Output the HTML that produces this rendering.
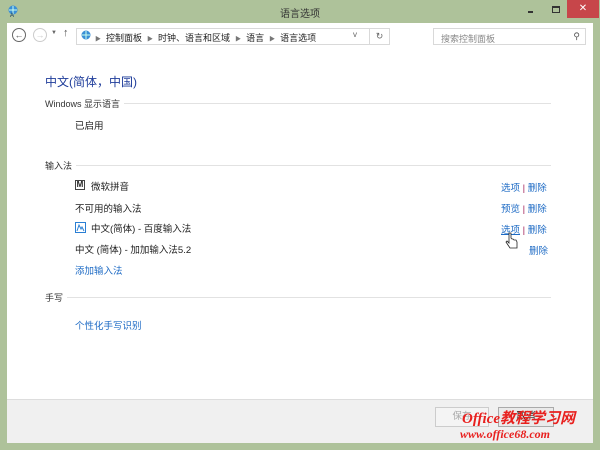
<!DOCTYPE html>
<html><head><meta charset="utf-8"><style>
*{margin:0;padding:0;box-sizing:border-box}
body{width:600px;height:450px;background:#aec29a;font-family:"Liberation Sans","Noto Sans CJK SC",sans-serif;font-size:9.5px;color:#1e1e1e;position:relative;overflow:hidden}
.a{position:absolute}
.link{color:#1e6bc5}
.sec{position:absolute;left:45px;right:49px;height:10px;display:flex;align-items:center;font-size:9px;color:#333}
.sec::after{content:"";flex:1;height:1px;background:#e2e2e2;margin-left:4px}
</style></head><body>
<div class="a" style="left:0;top:0;width:600px;height:23px;background:#aec29a"></div>
<div class="a" style="left:0;top:5px;width:600px;text-align:center;font-size:10px;color:#333">语言选项</div>
<svg class="a" style="left:7px;top:5px" width="12" height="12"><circle cx="6" cy="5" r="4.5" fill="#3a8fd6"/><path d="M2 5h8M6 1v8" stroke="#cfe" stroke-width="1"/><text x="3" y="12" font-size="6" fill="#135">A</text></svg>
<div class="a" style="left:528px;top:11px;width:5px;height:2px;background:#333"></div>
<div class="a" style="left:552px;top:6px;width:8px;height:7px;border:1px solid #333;border-top-width:2px"></div>
<div class="a" style="left:567px;top:0;width:32px;height:18px;background:#c7464a;color:#fff;text-align:center;font-size:10px;line-height:17px">✕</div>
<div class="a" style="left:7px;top:23px;width:586px;height:36px;background:#fff"></div>
<div class="a" style="left:12px;top:28px;width:14px;height:14px;border:1px solid #666;border-radius:50%;text-align:center;font-size:9px;line-height:12px;color:#555">←</div>
<div class="a" style="left:33px;top:28px;width:14px;height:14px;border:1px solid #ccc;border-radius:50%;text-align:center;font-size:9px;line-height:12px;color:#ccc">→</div>
<div class="a" style="left:51px;top:30px;font-size:6px;color:#666">▼</div>
<div class="a" style="left:63px;top:27px;font-size:11px;color:#555">↑</div>
<div class="a" style="left:76px;top:28px;width:294px;height:17px;border:1px solid #d9d9d9"></div>
<svg class="a" style="left:80px;top:30px" width="12" height="12"><circle cx="6" cy="5" r="4.5" fill="#3a8fd6"/><path d="M2 5h8M6 1v8" stroke="#cfe" stroke-width="1"/></svg>
<div class="a" style="left:95px;top:31px;font-size:9px;color:#222;white-space:nowrap"><span style="color:#777;font-size:6px">▶</span>&nbsp; 控制面板 &nbsp;<span style="color:#777;font-size:6px">▶</span>&nbsp; 时钟、语言和区域 &nbsp;<span style="color:#777;font-size:6px">▶</span>&nbsp; 语言 &nbsp;<span style="color:#777;font-size:6px">▶</span>&nbsp; 语言选项</div>
<div class="a" style="left:353px;top:30px;font-size:8px;color:#666">v</div>
<div class="a" style="left:370px;top:28px;width:20px;height:17px;border:1px solid #d9d9d9;border-left:none;text-align:center;font-size:9px;color:#666;line-height:15px">↻</div>
<div class="a" style="left:433px;top:28px;width:153px;height:17px;border:1px solid #d9d9d9;font-size:9px;color:#888;padding:3px 7px">搜索控制面板<span style="position:absolute;right:5px;top:2px;color:#555">⚲</span></div>
<div class="a" style="left:7px;top:59px;width:586px;height:340px;background:#fff"></div>
<div class="a" style="left:45px;top:73px;font-size:12px;color:#1e3c9a">中文(简体，中国)</div>
<div class="sec" style="top:98px">Windows 显示语言</div>
<div class="a" style="left:75px;top:118px">已启用</div>
<div class="sec" style="top:160px">输入法</div>
<div class="a" style="left:75px;top:180px;width:10px;height:10px;border:1px solid #444;font-size:8px;line-height:8px;text-align:center;font-weight:bold">M</div>
<div class="a" style="left:91px;top:179px">微软拼音</div>
<div class="a" style="left:75px;top:201px">不可用的输入法</div>
<svg class="a" style="left:75px;top:222px" width="11" height="11"><rect x=".5" y=".5" width="10" height="10" fill="#fff" stroke="#2a7fd4"/><path d="M2 9L4 3l2 4 1-2 2 4" stroke="#2a7fd4" fill="none"/></svg>
<div class="a" style="left:91px;top:221px">中文(简体) - 百度输入法</div>
<div class="a" style="left:75px;top:242px">中文 (简体) - 加加输入法5.2</div>
<div class="a link" style="left:75px;top:263px">添加输入法</div>
<div class="a link" style="left:501px;top:180px">选项 <span style="color:#a0205a">|</span> 删除</div>
<div class="a link" style="left:501px;top:201px">预览 <span style="color:#a0205a">|</span> 删除</div>
<div class="a link" style="left:501px;top:222px"><u>选项</u> <span style="color:#a0205a">|</span> 删除</div>
<div class="a link" style="left:529px;top:243px">删除</div>
<svg class="a" style="left:505px;top:232px" width="14" height="18"><path d="M4 1v10l-2-2-1 1 4 6h7v-6l-1-2h-2l-1-1h-1l-1-1V1z" fill="#fff" stroke="#222" stroke-width=".8"/></svg>
<div class="sec" style="top:292px">手写</div>
<div class="a link" style="left:75px;top:318px">个性化手写识别</div>
<div class="a" style="left:7px;top:399px;width:586px;height:44px;background:#f0f0f0;border-top:1px solid #ddd"></div>
<div class="a" style="left:435px;top:407px;width:54px;height:20px;border:1px solid #ccc;background:#f4f4f4;color:#aaa;text-align:center;line-height:18px">保存</div>
<div class="a" style="left:498px;top:407px;width:56px;height:20px;border:1px solid #aaa;background:#eaeaea;text-align:center;line-height:18px">取消</div>
<div class="a" style="left:462px;top:407px;font-size:15px;font-style:italic;font-weight:bold;color:#e8201e;font-family:'Liberation Serif','Noto Sans CJK SC',serif;white-space:nowrap">Office教程学习网</div>
<div class="a" style="left:460px;top:427px;font-size:12px;font-style:italic;font-weight:bold;color:#e8201e;font-family:'Liberation Serif',serif;white-space:nowrap">www.office68.com</div>
</body></html>
